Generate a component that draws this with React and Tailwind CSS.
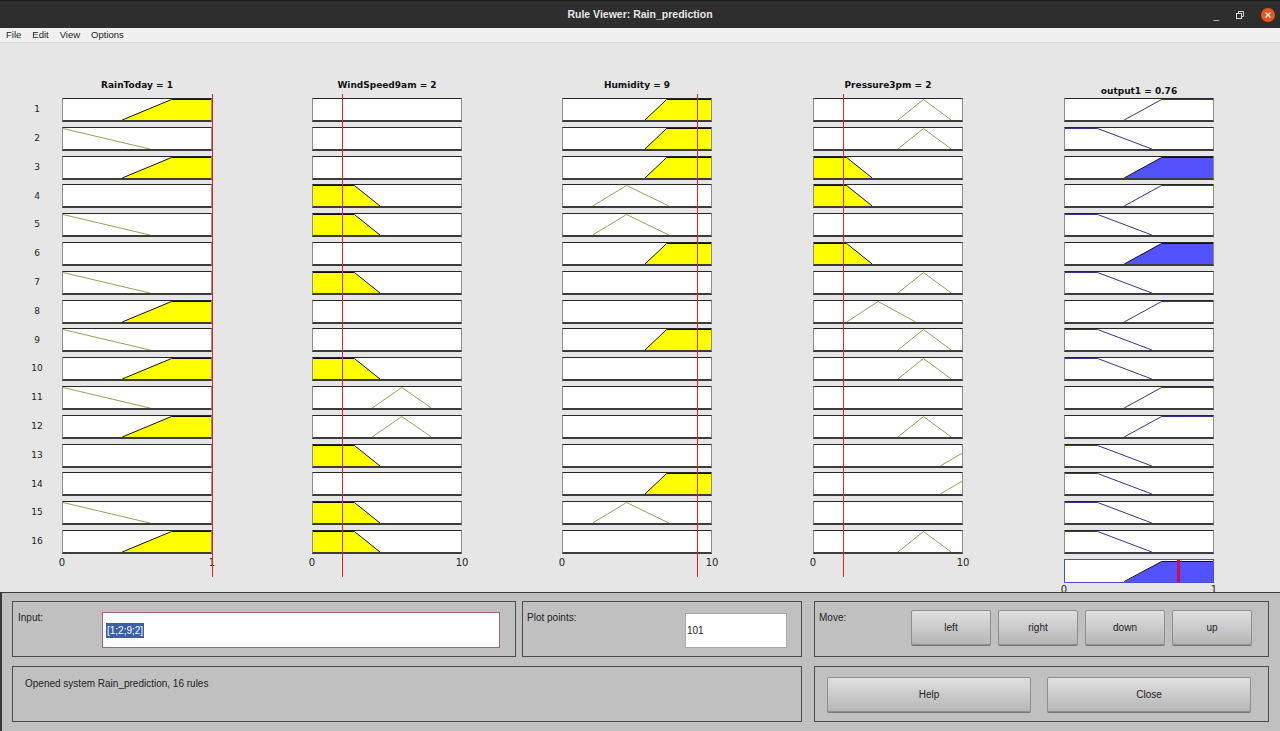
import React from 'react'

// membership function shapes, x as fraction of range, m as degree
const MF = {
  rtRise: [[0.4, 0], [0.733, 1], [1, 1]],
  rtFall: [[0, 1], [0.587, 0]],
  wsFall: [[0, 1], [0.28, 1], [0.453, 0]],
  wsTri: [[0.4, 0], [0.6, 1], [0.8, 0]],
  huRise: [[0.554, 0], [0.7, 1], [1, 1]],
  huTri: [[0.2, 0], [0.43, 1], [0.715, 0]],
  prTriHi: [[0.567, 0], [0.74, 1], [0.927, 0]],
  prFall: [[0, 1], [0.22, 1], [0.393, 0]],
  prTriMid: [[0.22, 0], [0.433, 1], [0.687, 0]],
  prEdge: [[0.853, 0], [1, 0.62]],
  oRise: [[0.4, 0], [0.653, 1], [1, 1]],
  oFall: [[0, 1], [0.22, 1], [0.587, 0]],
}

const RULES = [
  [['rtRise', 1], null, ['huRise', 1], ['prTriHi', 0], ['oRise', 0]],
  [['rtFall', 0], null, ['huRise', 1], ['prTriHi', 0], ['oFall', 0]],
  [['rtRise', 1], null, ['huRise', 1], ['prFall', 1], ['oRise', 1]],
  [null, ['wsFall', 1], ['huTri', 0], ['prFall', 1], ['oRise', 0]],
  [['rtFall', 0], ['wsFall', 1], ['huTri', 0], null, ['oFall', 0]],
  [null, null, ['huRise', 1], ['prFall', 1], ['oRise', 1]],
  [['rtFall', 0], ['wsFall', 1], null, ['prTriHi', 0], ['oFall', 0]],
  [['rtRise', 1], null, null, ['prTriMid', 0], ['oRise', 0]],
  [['rtFall', 0], null, ['huRise', 1], ['prTriHi', 0], ['oFall', 0]],
  [['rtRise', 1], ['wsFall', 1], null, ['prTriHi', 0], ['oFall', 0]],
  [['rtFall', 0], ['wsTri', 0], null, null, ['oRise', 0]],
  [['rtRise', 1], ['wsTri', 0], null, ['prTriHi', 0], ['oRise', 0]],
  [null, ['wsFall', 1], null, ['prEdge', 0], ['oFall', 0]],
  [null, null, ['huRise', 1], ['prEdge', 0], ['oFall', 0]],
  [['rtFall', 0], ['wsFall', 1], ['huTri', 0], null, ['oFall', 0]],
  [['rtRise', 1], ['wsFall', 1], null, ['prTriHi', 0], ['oFall', 0]],
]

const COLUMNS = [
  { title: 'RainToday = 1', value: 1, ticks: ['0', '1'] },
  { title: 'WindSpeed9am = 2', value: 0.2, ticks: ['0', '10'] },
  { title: 'Humidity = 9', value: 0.9, ticks: ['0', '10'] },
  { title: 'Pressure3pm = 2', value: 0.2, ticks: ['0', '10'] },
]

const W = 148
const H = 21
const px = (x) => (x * W).toFixed(1)
const py = (m) => (0.5 + (1 - m) * 20.5).toFixed(1)

function Curve({ shape, filled, output }) {
  if (!shape) return null
  const pts = MF[shape]
  const line = pts.map(([x, m]) => `${px(x)},${py(m)}`).join(' ')
  const first = pts[0]
  const last = pts[pts.length - 1]
  const poly = `${px(first[0])},${py(0)} ${line} ${px(last[0])},${py(0)}`
  const fillColor = output ? '#5252ff' : '#ffff00'
  const lineColor = output ? '#34348a' : '#9c9c58'
  return (
    <svg width={W} height={H} viewBox={`0 0 ${W} ${H}`} className="block">
      {filled ? <polygon points={poly} fill={fillColor} /> : null}
      <polyline
        points={line}
        fill="none"
        stroke={filled ? '#111' : lineColor}
        strokeWidth="1"
      />
    </svg>
  )
}

function PlotBox({ cell, output }) {
  return (
    <div className="w-[150px] h-[24px] bg-white border border-[#8c8c8c] border-t-[#262626] border-b-2 border-b-[#3c3c3c]">
      {cell ? <Curve shape={cell[0]} filled={cell[1]} output={output} /> : null}
    </div>
  )
}

function Ticks({ ticks, className }) {
  return (
    <div className={`relative h-[14px] text-[10px] leading-[12px] text-[#222] ${className}`}>
      <span className="absolute left-0 -translate-x-1/2">{ticks[0]}</span>
      <span className="absolute left-full -translate-x-1/2">{ticks[1]}</span>
    </div>
  )
}

function InputColumn({ col, idx, className }) {
  return (
    <div className={`relative w-[150px] ${className}`}>
      <div className="h-[55px] pt-[36px] text-center text-[9px] leading-[12px] font-bold text-[#111] whitespace-nowrap">
        {col.title}
      </div>
      <div className="flex flex-col gap-[4.8px]">
        {RULES.map((r, i) => (
          <PlotBox key={i} cell={r[idx]} />
        ))}
      </div>
      <Ticks ticks={col.ticks} className="mt-[3px]" />
      {/* current input value marker */}
      <div
        className="absolute z-10 top-[51px] h-[483px] w-px bg-[#e02424]"
        style={{ left: `${Math.round(col.value * 150)}px` }}
      ></div>
    </div>
  )
}

function OutputColumn({ className }) {
  return (
    <div className={`relative w-[150px] ${className}`}>
      <div className="h-[55px] pt-[42px] text-center text-[9px] leading-[12px] font-bold text-[#111] whitespace-nowrap">
        output1 = 0.76
      </div>
      <div className="flex flex-col gap-[4.8px]">
        {RULES.map((r, i) => (
          <PlotBox key={i} cell={r[4]} output />
        ))}
        <div className="relative w-[150px] h-[24px] bg-white border border-[#4c4ccf]">
          <svg width={W} height={22} viewBox={`0 0 ${W} 22`} className="block">
            <polygon
              points={`${px(0.4)},22 ${px(0.653)},1.5 ${W},1.5 ${W},22`}
              fill="#5252ff"
            />
            <polyline points={`${px(0.4)},21.5 ${px(0.653)},1.5 ${W},1.5`} fill="none" stroke="#111" strokeWidth="1" />
          </svg>
          <div className="absolute left-[112px] top-0 h-[22px] w-[3px] bg-[#d0103c]"></div>
        </div>
      </div>
      <Ticks ticks={['0', '1']} className="mt-[1px]" />
    </div>
  )
}

function Panel({ className, children }) {
  return <div className={`border border-[#4a4a4a] ${className}`}>{children}</div>
}

function Btn({ label, className }) {
  return (
    <div
      className={`flex items-center justify-center h-[35px] rounded-[2px] border border-[#8e8e8e] bg-gradient-to-b from-[#e0e0e0] to-[#b6b6b6] shadow-[0_1px_0_#777] text-[10px] text-[#222] ${className}`}
    >
      {label}
    </div>
  )
}

export default function App() {
  return (
    <div className="w-[1280px] h-[731px] overflow-hidden flex flex-col bg-[#e6e6e6] font-['Liberation_Sans',Arial,sans-serif]">
      {/* Title bar */}
      <div className="relative h-[28px] bg-[#2e2e2e] border-t border-[#1c1c1c] flex items-center justify-center">
        <span className="text-[10.5px] font-bold text-[#e8e8e8]">Rule Viewer: Rain_prediction</span>
        <div className="absolute right-[5px] top-0 h-full flex items-center gap-[16px] text-[#d8d8d8]">
          <span className="text-[10px] leading-none mt-[2px]">_</span>
          <svg width="10" height="10" viewBox="0 0 10 10">
            <rect x="1.5" y="3.5" width="5" height="5" fill="none" stroke="#d8d8d8" strokeWidth="1" />
            <path d="M3.5 3.5V1.5h5v5h-2" fill="none" stroke="#d8d8d8" strokeWidth="1" />
          </svg>
          <div className="w-[14px] h-[14px] rounded-full bg-[#e9541f] flex items-center justify-center">
            <svg width="6" height="6" viewBox="0 0 6 6">
              <path d="M0.5 0.5L5.5 5.5M5.5 0.5L0.5 5.5" stroke="#fff" strokeWidth="1.3" />
            </svg>
          </div>
        </div>
      </div>

      {/* Menu bar */}
      <div className="h-[15px] bg-[#f0f0f0] border-b border-[#dadada] flex items-center gap-[11px] pl-[6px] text-[9.5px] text-[#222]">
        <span>File</span>
        <span>Edit</span>
        <span>View</span>
        <span>Options</span>
      </div>

      {/* Plots */}
      <div className="h-[549px] overflow-hidden flex">
        <div className="w-[62px] pl-[12px] font-['DejaVu_Sans',sans-serif]">
          <div className="h-[55px]"></div>
          <div className="flex flex-col gap-[4.8px]">
            {RULES.map((_, i) => (
              <div key={i} className="w-[50px] h-[24px] flex items-center justify-center text-[9px] text-[#222]">
                {i + 1}
              </div>
            ))}
          </div>
        </div>
        <div className="flex font-['DejaVu_Sans',sans-serif]">
          <InputColumn col={COLUMNS[0]} idx={0} />
          <InputColumn col={COLUMNS[1]} idx={1} className="ml-[100px]" />
          <InputColumn col={COLUMNS[2]} idx={2} className="ml-[100px]" />
          <InputColumn col={COLUMNS[3]} idx={3} className="ml-[101px]" />
          <OutputColumn className="ml-[101px]" />
        </div>
      </div>

      {/* Controls */}
      <div className="flex-1 bg-[#c0c0c0] border-t border-[#3a3a3a] border-l-2 border-l-[#3a3a3a] pt-[8px] pl-[10px] flex flex-col gap-[9px] text-[10px] text-[#222]">
        <div className="flex">
          <Panel className="w-[504px] h-[56px] flex items-start pl-[5px] pt-[8px]">
            <span className="w-[84px]">Input:</span>
            <div className="w-[398px] h-[36px] mt-[2px] bg-white border border-[#a4607c] flex items-center pl-[3px]">
              <span className="bg-[#3a5ea8] text-white px-px">[1;2;9;2]</span>
            </div>
          </Panel>
          <Panel className="ml-[6px] w-[280px] h-[56px] flex items-start pl-[4px] pt-[8px]">
            <span className="w-[158px]">Plot points:</span>
            <div className="w-[102px] h-[35px] mt-[3px] bg-white border border-[#a8a8a8] flex items-center pl-px">
              101
            </div>
          </Panel>
          <Panel className="ml-[12px] w-[455px] h-[56px] flex items-start pl-[4px] pt-[8px]">
            <span className="w-[92px]">Move:</span>
            <div className="flex gap-[7px]">
              <Btn label="left" className="w-[80px]" />
              <Btn label="right" className="w-[80px]" />
              <Btn label="down" className="w-[80px]" />
              <Btn label="up" className="w-[80px]" />
            </div>
          </Panel>
        </div>
        <div className="flex">
          <Panel className="w-[790px] h-[56px] pl-[12px] pt-[9px]">
            Opened system Rain_prediction, 16 rules
          </Panel>
          <Panel className="ml-[12px] w-[455px] h-[56px] flex items-center gap-[16px] pl-[12px]">
            <Btn label="Help" className="w-[204px]" />
            <Btn label="Close" className="w-[204px]" />
          </Panel>
        </div>
      </div>
    </div>
  )
}
